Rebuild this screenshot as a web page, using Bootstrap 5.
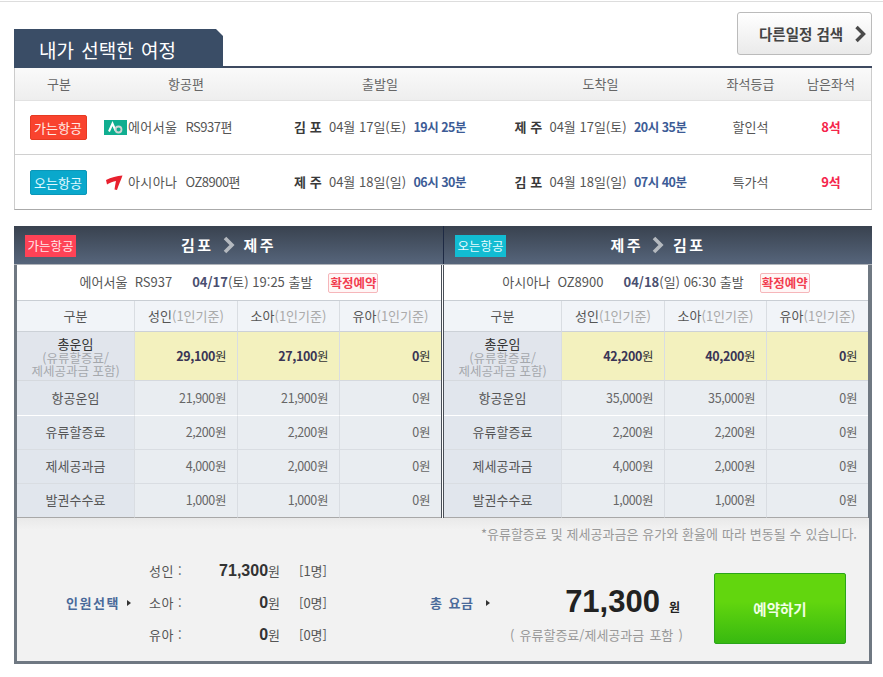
<!DOCTYPE html>
<html lang="ko">
<head>
<meta charset="utf-8">
<title>내가 선택한 여정</title>
<link rel="stylesheet" href="https://cdn.jsdelivr.net/npm/bootstrap@5.3.0/dist/css/bootstrap.min.css">
<style>
html,body{background:#fff}
body{font-family:"Noto Sans CJK KR","Liberation Sans",sans-serif;font-size:13px;line-height:1.3;color:#555;letter-spacing:0}
.topline{height:1px;margin-top:1px;background:#ddd}
.page-wrap{width:858px;margin-left:14px}
.head-row{height:64px}
.trip-tab{width:209px;height:39px;background:#3a4d66;color:#fff;font-size:19px;line-height:41px;padding-left:25px;word-spacing:2px;clip-path:polygon(0 0,202px 0,209px 7px,209px 100%,0 100%);margin-bottom:-2px;position:relative;z-index:1}
.other-btn{width:135px;height:43px;margin-bottom:11px;padding:0 4px 0 21px;border:1px solid #bbb;border-radius:3px;background:linear-gradient(#fff,#eaeaea);color:#444;font-size:14.5px;font-weight:700;white-space:nowrap;--bs-btn-hover-color:#444}
.navy-rule{height:2px;background:#3e4a60}
.trip-tb{table-layout:fixed;width:858px;margin:0;border-collapse:separate;border-spacing:0;border-left:1px solid #ccc;border-right:1px solid #ccc;border-bottom:1px solid #aaa;color:#555}
.trip-tb th,.trip-tb td{padding:0;text-align:center;vertical-align:middle;font-weight:400;white-space:nowrap;color:#555;border-bottom:1px solid #d0d0d0}
.trip-tb th{height:33px;background:linear-gradient(#fafafa,#eeeeee);border-bottom:1px solid #e2e2e2;color:#666}
.trip-tb td{height:54px}
.trip-tb tr:last-child td{border-bottom:0}
.way-tag{display:inline-block;width:57px;height:25px;line-height:23px;border:1px solid;border-radius:2px;color:#ffe9e4;font-size:13px;margin-right:2px}
.way-go{background:#f9432e;border-color:#e63a22}
.way-back{background:#0aa8cc;border-color:#0a97b8;color:#e0f8ff}
.air-cell{display:flex;align-items:center;letter-spacing:.4px}
.air-cell i{font-style:normal;letter-spacing:-.5px}
.city{font-weight:700;color:#3a3a3a}
.hour{font-weight:700;color:#3d5c96;font-size:12.5px;letter-spacing:-.5px}
.seat-left{font-weight:700;color:#f5254b}
.fare-head{height:39px;background:linear-gradient(#39424f,#56657b);border-bottom:1px solid #b0b4ba;color:#fff}
.fare-half{position:relative;display:flex;align-items:center;justify-content:center;font-weight:700;font-size:15px;letter-spacing:2.5px}
.fare-half.one{width:430px;border-right:1px solid #1e2a44}
.fare-half.two{width:428px}
.fare-half .hd-tag{position:absolute;left:11px;top:9px;width:51px;height:22px;line-height:21px;text-align:center;font-size:12.5px;font-weight:400;letter-spacing:0;color:#ffe6ea;background:#ff4256}
.fare-half .hd-tag.blue{background:#12bcd2;color:#e4fbff}
.fare-body{display:flex;border-left:3px solid #6f7882;border-right:4px solid #6f7882}
.fare-col{width:424px;flex:none}
.fare-col.first{box-sizing:content-box;border-right:3px double #4a5058}
.fare-info{height:36px;display:flex;align-items:center;justify-content:center;gap:20px;background:#fff;border-bottom:1px solid #c9ced4;color:#555;font-size:13px;white-space:nowrap}
.fare-info b{color:#4a4f70}
.ok-tag{display:inline-block;width:50px;height:20px;line-height:18px;text-align:center;border:1px solid #f6b6ba;border-radius:2px;background:#fff6f6;color:#f23d50;font-size:12.5px;font-weight:700;margin-left:-4px}
.fare-tb{table-layout:fixed;width:424px;margin:0;border-collapse:separate;border-spacing:0}
.fare-tb th,.fare-tb td{padding:0;font-weight:400;font-size:12.5px;letter-spacing:-.4px;white-space:nowrap;vertical-align:middle;background:#e9edf1;color:#666;text-align:right;padding-right:11px;height:34px;border-right:1px solid #d9dde2;border-bottom:1px solid #d9dde2}
.fare-tb tr>*:last-child{border-right:0}
.fare-tb .hd>*{height:31px;background:#f1f4f8;text-align:center;padding:0;font-size:13px;letter-spacing:0;border-bottom:1px solid #ccd1d7;color:#555}
.fare-tb .hd span{color:#aaa}
.fare-tb .rowname{background:#e1e6ed;text-align:center;padding:0;font-size:13px;letter-spacing:0;color:#555}
.fare-tb .hd .rowname{background:#f1f4f8}
.fare-tb .sum>*{height:49px;background:#f3f1be;color:#3a3555;font-weight:700}
.fare-tb .sum>*,.fare-tb .sum>.rowname{border-bottom:1px solid #d5d9de}
.fare-tb .sum>.rowname{background:#e1e5ec;font-weight:400;color:#333;line-height:13.5px;padding-top:3px}
.fare-tb .sum em{display:block;font-style:normal;color:#a5a8ac;font-size:12.5px}
.fare-tb .sum i{font-style:normal;font-weight:400;color:#333}
.fare-tb .air>*{height:35px;border-bottom:1px solid #fff}
.fare-tb .end>*{border-bottom:1px solid #a8a8a8}
.fare-foot{height:146px;background:linear-gradient(#e9e9e9,#f2f2f2 12px);border-left:3px solid #6f7882;border-right:3px solid #6f7882;border-bottom:3px solid #6f7882}
.fare-note{height:37px;padding:8px 12px 0 0;text-align:right;color:#999;font-size:13px;white-space:nowrap;word-spacing:.3px}
.sel-label{width:83px;padding-left:49px;box-sizing:content-box;color:#4a6a9a;font-weight:700;letter-spacing:1.5px;white-space:nowrap}
.tri{display:inline-block;width:0;height:0;border-left:4px solid #333;border-top:3px solid transparent;border-bottom:3px solid transparent;vertical-align:2px;margin-left:7px}
.pax-list{width:281px}
.pax-row{display:flex;align-items:center;height:32px;color:#555}
.pax-row .who{width:60px;letter-spacing:.5px}
.pax-row .amt{width:71px;text-align:right}
.pax-row .amt b{font-family:"Liberation Sans",sans-serif;font-size:16px;color:#333}
.pax-row .cnt{margin-left:19px}
.total-label{width:80px;color:#4a6a9a;font-weight:700;white-space:nowrap;word-spacing:2px;letter-spacing:.5px}
.total-label .tri{margin-left:12px}
.total-box{width:174px;text-align:right;padding-right:2px;margin-top:21px}
.total-num{font-family:"Liberation Sans",sans-serif;font-size:31px;font-weight:700;color:#222;line-height:38px;white-space:nowrap}
.total-num small{font-family:"Noto Sans CJK KR",sans-serif;font-size:12px;font-weight:700;margin:0 2px 0 9px;color:#222}
.total-sub{color:#999;margin-top:1px;white-space:nowrap;word-spacing:1.5px}
.book-btn{width:132px;height:71px;margin:11px 0 0 30px;padding:0;border:1px solid #2ba51a;border-radius:2px;background:linear-gradient(#62d60e 40%,#38b910);color:#f2ffe6;font-size:14.5px;font-weight:700;--bs-btn-hover-color:#fff}
</style>
</head>
<body>
<div class="topline"></div>
<div class="page-wrap">
  <div class="head-row d-flex justify-content-between align-items-end">
    <div class="trip-tab">내가 선택한 여정</div>
    <button type="button" class="btn other-btn d-flex align-items-center justify-content-between">다른일정 검색
      <svg width="13" height="18" viewBox="0 0 13 18"><path d="M2.5 2l7 7-7 7" fill="none" stroke="#4a4a4a" stroke-width="3.4"/></svg>
    </button>
  </div>
  <div class="navy-rule"></div>
  <table class="table trip-tb">
    <colgroup><col style="width:88px"><col style="width:166px"><col style="width:222px"><col style="width:219px"><col style="width:81px"><col></colgroup>
    <thead><tr><th>구분</th><th>항공편</th><th>출발일</th><th>도착일</th><th>좌석등급</th><th>남은좌석</th></tr></thead>
    <tbody>
      <tr>
        <td><span class="way-tag way-go">가는항공</span></td>
        <td><div class="air-cell">
          <svg width="25" height="15" viewBox="0 0 23 15"><rect width="23" height="15" fill="#10ae90"/><path d="M5 11.5L8.5 3.5l3 7" fill="none" stroke="#fff" stroke-width="2"/><circle cx="14.5" cy="9.5" r="3" fill="none" stroke="#cfd6d4" stroke-width="1.8"/></svg>
          <span>에어서울&nbsp;&nbsp;<i>RS937편</i></span></div></td>
        <td><span class="city">김 포</span>&nbsp; 04월 17일(토)&nbsp; <span class="hour">19시 25분</span></td>
        <td><span class="city">제 주</span>&nbsp; 04월 17일(토)&nbsp; <span class="hour">20시 35분</span></td>
        <td>할인석</td>
        <td><span class="seat-left">8석</span></td>
      </tr>
      <tr>
        <td><span class="way-tag way-back">오는항공</span></td>
        <td><div class="air-cell">
          <svg width="25" height="17" viewBox="0 0 25 17"><path d="M3 6C8 3.5 14 2 19.5 1.5 18 6 15.5 11 14 16L11.5 15.5C12 12 12.5 9 13 7 10 7.5 7 8.5 4 10.5z" fill="#e8202e"/></svg>
          <span>아시아나&nbsp;&nbsp;<i>OZ8900편</i></span></div></td>
        <td><span class="city">제 주</span>&nbsp; 04월 18일(일)&nbsp; <span class="hour">06시 30분</span></td>
        <td><span class="city">김 포</span>&nbsp; 04월 18일(일)&nbsp; <span class="hour">07시 40분</span></td>
        <td>특가석</td>
        <td><span class="seat-left">9석</span></td>
      </tr>
    </tbody>
  </table>

  <div class="fare-wrap mt-3">
    <div class="fare-head d-flex">
      <div class="fare-half one"><span class="hd-tag">가는항공</span>김포
        <svg class="mx-2" width="14" height="18" viewBox="0 0 14 18"><path d="M3 2l7 7-7 7" fill="none" stroke="#b4b9bf" stroke-width="3.6"/></svg>제주</div>
      <div class="fare-half two"><span class="hd-tag blue">오는항공</span>제주
        <svg class="mx-2" width="14" height="18" viewBox="0 0 14 18"><path d="M3 2l7 7-7 7" fill="none" stroke="#b4b9bf" stroke-width="3.6"/></svg>김포</div>
    </div>
    <div class="fare-body">
      <div class="fare-col first">
        <div class="fare-info"><span>에어서울&nbsp;&nbsp;RS937</span><span><b>04/17</b>(토) 19:25 출발</span><span class="ok-tag">확정예약</span></div>
        <table class="table fare-tb">
          <colgroup><col style="width:118px"><col style="width:103px"><col style="width:102px"><col></colgroup>
          <tr class="hd"><th class="rowname">구분</th><th>성인<span>(1인기준)</span></th><th>소아<span>(1인기준)</span></th><th>유아<span>(1인기준)</span></th></tr>
          <tr class="sum"><td class="rowname">총운임<em>(유류할증료/</em><em>제세공과금 포함)</em></td><td>29,100<i>원</i></td><td>27,100<i>원</i></td><td>0<i>원</i></td></tr>
          <tr class="air"><td class="rowname">항공운임</td><td>21,900원</td><td>21,900원</td><td>0원</td></tr>
          <tr><td class="rowname">유류할증료</td><td>2,200원</td><td>2,200원</td><td>0원</td></tr>
          <tr><td class="rowname">제세공과금</td><td>4,000원</td><td>2,000원</td><td>0원</td></tr>
          <tr class="end"><td class="rowname">발권수수료</td><td>1,000원</td><td>1,000원</td><td>0원</td></tr>
        </table>
      </div>
      <div class="fare-col">
        <div class="fare-info"><span>아시아나&nbsp;&nbsp;OZ8900</span><span><b>04/18</b>(일) 06:30 출발</span><span class="ok-tag">확정예약</span></div>
        <table class="table fare-tb">
          <colgroup><col style="width:118px"><col style="width:103px"><col style="width:102px"><col></colgroup>
          <tr class="hd"><th class="rowname">구분</th><th>성인<span>(1인기준)</span></th><th>소아<span>(1인기준)</span></th><th>유아<span>(1인기준)</span></th></tr>
          <tr class="sum"><td class="rowname">총운임<em>(유류할증료/</em><em>제세공과금 포함)</em></td><td>42,200<i>원</i></td><td>40,200<i>원</i></td><td>0<i>원</i></td></tr>
          <tr class="air"><td class="rowname">항공운임</td><td>35,000원</td><td>35,000원</td><td>0원</td></tr>
          <tr><td class="rowname">유류할증료</td><td>2,200원</td><td>2,200원</td><td>0원</td></tr>
          <tr><td class="rowname">제세공과금</td><td>4,000원</td><td>2,000원</td><td>0원</td></tr>
          <tr class="end"><td class="rowname">발권수수료</td><td>1,000원</td><td>1,000원</td><td>0원</td></tr>
        </table>
      </div>
    </div>
    <div class="fare-foot">
      <div class="fare-note">*유류할증료 및 제세공과금은 유가와 환율에 따라 변동될 수 있습니다.</div>
      <div class="d-flex align-items-center">
        <div class="sel-label">인원선택<span class="tri"></span></div>
        <div class="pax-list">
          <div class="pax-row"><span class="who">성인 :</span><span class="amt"><b>71,300</b>원</span><span class="cnt">[1명]</span></div>
          <div class="pax-row"><span class="who">소아 :</span><span class="amt"><b>0</b>원</span><span class="cnt">[0명]</span></div>
          <div class="pax-row"><span class="who">유아 :</span><span class="amt"><b>0</b>원</span><span class="cnt">[0명]</span></div>
        </div>
        <div class="total-label">총 요금<span class="tri"></span></div>
        <div class="total-box">
          <div class="total-num">71,300<small>원</small></div>
          <div class="total-sub">( 유류할증료/제세공과금 포함 )</div>
        </div>
        <button type="button" class="btn book-btn">예약하기</button>
      </div>
    </div>
  </div>
</div>
<script src="https://cdn.jsdelivr.net/npm/bootstrap@5.3.0/dist/js/bootstrap.bundle.min.js"></script>
</body>
</html>
